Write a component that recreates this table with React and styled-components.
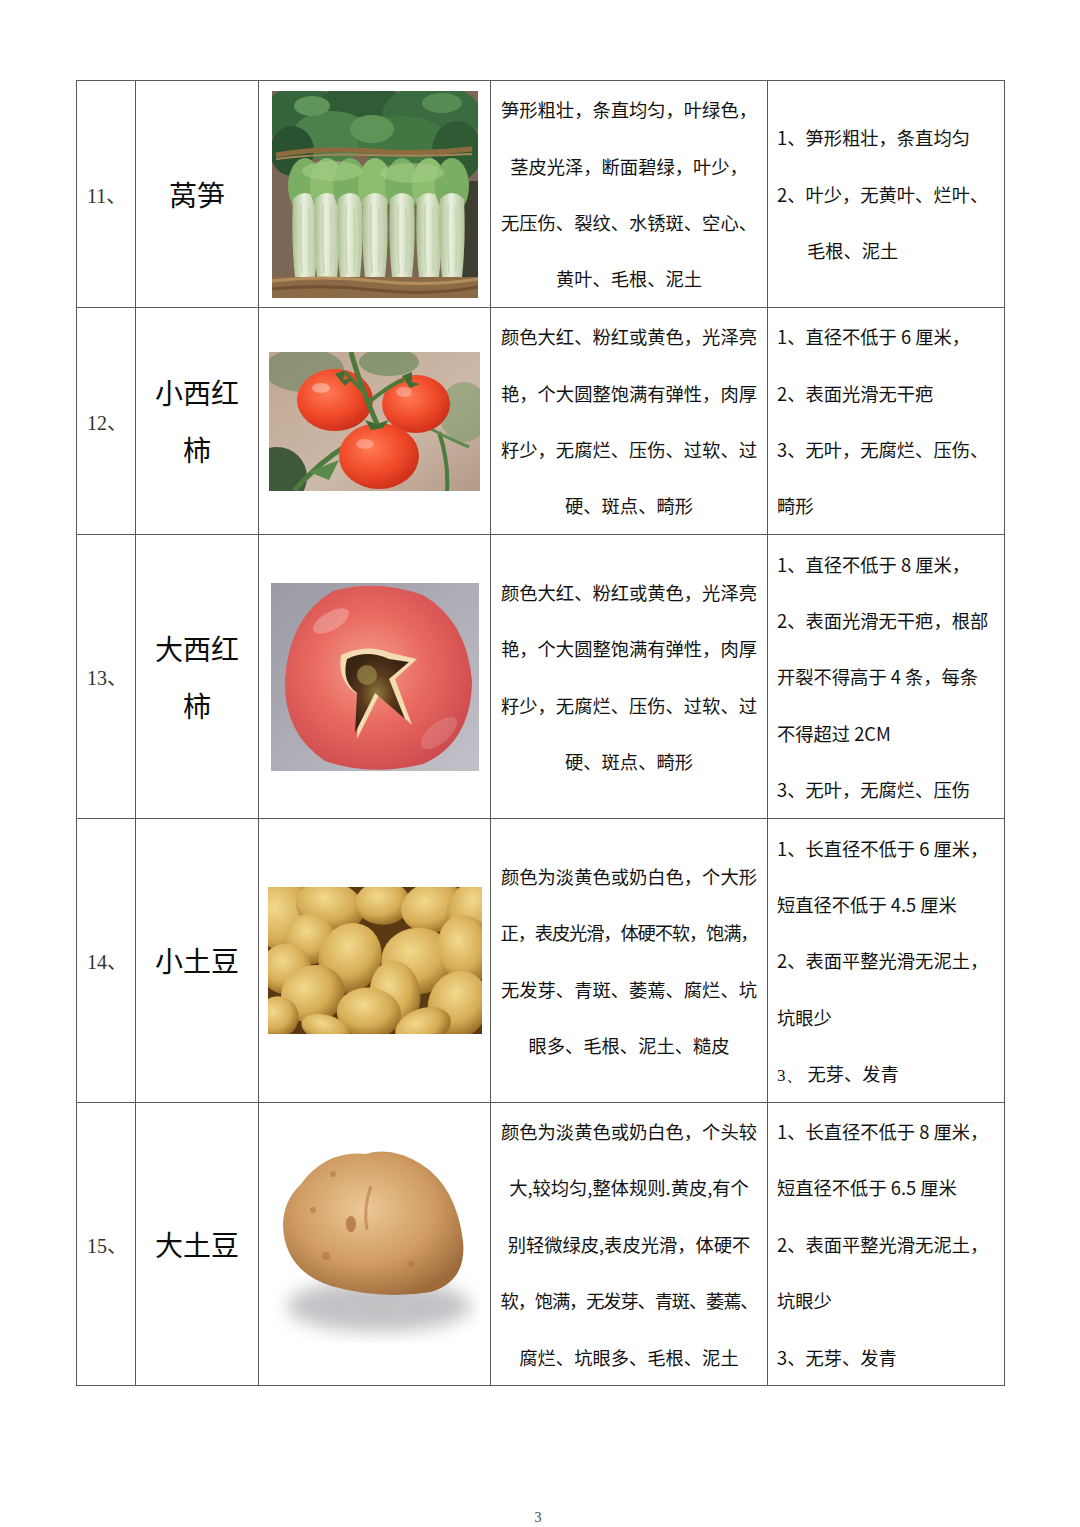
import React from "react";
import styled, { createGlobalStyle } from "styled-components";

const GlobalStyle = createGlobalStyle`
  html, body {
    margin: 0;
    padding: 0;
    background: #ffffff;
  }
  body {
    font-family: "Noto Sans CJK SC", "Noto Sans", sans-serif;
    color: #121212;
  }
`;

const Page = styled.div`
  width: 1080px;
  height: 1527px;
  box-sizing: border-box;
  padding-top: 80px;
  background: #fff;
  overflow: hidden;
`;

const Table = styled.table`
  margin-left: 76px;
  width: 928px;
  border-collapse: collapse;
  table-layout: fixed;
`;

const Cell = styled.td`
  border: 1.5px solid #5a5a5a;
  height: ${(p) => p.$h}px;
  padding: 0;
  vertical-align: middle;
  box-sizing: border-box;
`;

const NoCell = styled(Cell)`
  padding-left: 10px;
  font-family: "Liberation Serif", "Noto Sans CJK SC", serif;
  font-size: 20px;
  color: #333;
`;

const NameCell = styled(Cell)`
  text-align: center;
  font-size: 28px;
  font-weight: 400;
  line-height: 57px;
  color: #0c0c0c;
`;

const PicCell = styled(Cell)`
  text-align: center;
  svg {
    display: block;
    margin: 0 auto;
  }
`;

const DescCell = styled(Cell)`
  text-align: center;
  padding: 0 4px;
`;

const StdCell = styled(Cell)`
  text-align: left;
  padding-left: 9px;
`;

const Line = styled.div`
  font-size: 18.3px;
  line-height: 56.4px;
  height: 56.4px;
  white-space: nowrap;
  letter-spacing: ${(p) => (p.$tight ? "-1.15px" : "0")};
  padding-left: ${(p) => (p.$indent ? "30px" : "0")};
`;

const SerifNum = styled.span`
  font-family: "Liberation Serif", serif;
  font-size: 17px;
  margin-right: 5px;
`;

const Footer = styled.div`
  margin-top: 124px;
  width: 1076px;
  text-align: center;
  font-family: "Liberation Serif", serif;
  font-size: 14px;
  line-height: 16px;
  color: #444;
`;

const Lettuce = () => (
  <svg width="206" height="207" viewBox="0 0 206 207">
    <defs>
      <linearGradient id="stalk" x1="0" x2="1" y1="0" y2="0">
        <stop offset="0" stopColor="#a9bd90" />
        <stop offset="0.45" stopColor="#e9f0de" />
        <stop offset="1" stopColor="#b3c59b" />
      </linearGradient>
    </defs>
    <rect width="206" height="207" fill="#7c6655" />
    <rect x="180" y="90" width="26" height="110" fill="#3e3d32" />
    <ellipse cx="30" cy="25" rx="40" ry="30" fill="#35653a" />
    <ellipse cx="90" cy="18" rx="45" ry="26" fill="#2f5c34" />
    <ellipse cx="160" cy="25" rx="50" ry="32" fill="#3a6c3f" />
    <ellipse cx="60" cy="45" rx="40" ry="25" fill="#4b824b" />
    <ellipse cx="130" cy="50" rx="45" ry="25" fill="#427744" />
    <ellipse cx="185" cy="60" rx="25" ry="30" fill="#2f5a33" />
    <ellipse cx="20" cy="60" rx="22" ry="25" fill="#2a5230" />
    <ellipse cx="100" cy="38" rx="22" ry="14" fill="#5e9458" />
    <ellipse cx="40" cy="15" rx="18" ry="10" fill="#5f955a" />
    <ellipse cx="170" cy="12" rx="20" ry="10" fill="#588c55" />
    <path d="M4 64 Q 50 56 100 60 T 200 58" stroke="#8c6b3f" strokeWidth="5" fill="none" />
    <path d="M4 68 Q 50 62 100 64 T 200 63" stroke="#a88556" strokeWidth="2" fill="none" />
    {[33, 55, 78, 103, 130, 157, 180].map((x, i) => (
      <g key={i}>
        <ellipse cx={x} cy="95" rx="17" ry="28" fill={i % 2 ? "#8fbd70" : "#7aae62"} />
        <path
          d={`M${x - 12} 108 Q ${x - 14} 150 ${x - 10} 186 L ${x + 10} 186 Q ${x + 14} 150 ${x + 12} 108 Q ${x} 96 ${x - 12} 108 Z`}
          fill="url(#stalk)"
        />
        <path d={`M${x - 4} 114 Q ${x - 5} 150 ${x - 3} 182 M ${x + 4} 116 Q ${x + 5} 150 ${x + 4} 180`} stroke="#c6d4b0" strokeWidth="1.5" fill="none" />
      </g>
    ))}
    <ellipse cx="60" cy="80" rx="30" ry="10" fill="#a3cf84" opacity="0.6" />
    <ellipse cx="140" cy="82" rx="32" ry="10" fill="#a8d289" opacity="0.5" />
    <rect x="0" y="186" width="206" height="21" fill="#8b6a45" />
    <path d="M0 190 Q 50 184 103 190 T 206 188" stroke="#b48d5c" strokeWidth="3" fill="none" />
    <path d="M0 198 Q 50 193 103 199 T 206 196" stroke="#6f5133" strokeWidth="3" fill="none" />
  </svg>
);

const Tomatoes = () => (
  <svg width="211" height="139" viewBox="0 0 211 139">
    <defs>
      <linearGradient id="soil" x1="0" x2="1" y1="0" y2="1">
        <stop offset="0" stopColor="#bea592" />
        <stop offset="0.6" stopColor="#cdb9a8" />
        <stop offset="1" stopColor="#b49a88" />
      </linearGradient>
      <radialGradient id="red" cx="0.4" cy="0.38" r="0.7">
        <stop offset="0" stopColor="#ff7a55" />
        <stop offset="0.55" stopColor="#f04a2a" />
        <stop offset="1" stopColor="#c72a16" />
      </radialGradient>
    </defs>
    <rect width="211" height="139" fill="url(#soil)" />
    <ellipse cx="35" cy="18" rx="40" ry="22" fill="#62805a" opacity="0.55" />
    <ellipse cx="120" cy="10" rx="30" ry="14" fill="#5d8453" opacity="0.6" />
    <ellipse cx="195" cy="60" rx="25" ry="30" fill="#6d9660" opacity="0.5" />
    <ellipse cx="8" cy="125" rx="30" ry="30" fill="#3f5a3a" />
    <path d="M25 139 Q 50 110 80 92" stroke="#4d7a3e" strokeWidth="5" fill="none" />
    <path d="M40 120 L 70 108 L 60 128 Z" fill="#5a8a48" />
    <path d="M170 80 Q 180 110 178 139" stroke="#4d7a3e" strokeWidth="4" fill="none" />
    <path d="M150 70 Q 175 85 200 95" stroke="#5d8a4a" strokeWidth="3" fill="none" />
    <ellipse cx="66" cy="48" rx="38" ry="31" fill="url(#red)" />
    <ellipse cx="147" cy="52" rx="34" ry="29" fill="url(#red)" />
    <ellipse cx="110" cy="104" rx="40" ry="33" fill="url(#red)" />
    <ellipse cx="52" cy="36" rx="9" ry="5" fill="#ffffff" opacity="0.35" />
    <ellipse cx="135" cy="40" rx="8" ry="5" fill="#ffffff" opacity="0.3" />
    <ellipse cx="96" cy="92" rx="9" ry="5" fill="#ffffff" opacity="0.3" />
    <path d="M82 0 Q 90 30 108 72" stroke="#4c7a3c" strokeWidth="5" fill="none" />
    <path d="M95 40 Q 80 25 76 20" stroke="#4c7a3c" strokeWidth="4" fill="none" />
    <path d="M100 50 Q 125 30 135 28" stroke="#4c7a3c" strokeWidth="4" fill="none" />
    <path d="M66 22 l 10 -4 l -2 10 l 10 -2 l -8 8 Z" fill="#3f6d33" />
    <path d="M133 24 l 10 -4 l 0 10 l 8 2 l -10 4 Z" fill="#3f6d33" />
    <path d="M96 68 l 12 4 l 12 -4 l -6 8 l -12 2 Z" fill="#3f6d33" />
  </svg>
);

const BigTomato = () => (
  <svg width="208" height="188" viewBox="0 0 208 188">
    <defs>
      <linearGradient id="gray" x1="0" x2="1" y1="0" y2="1">
        <stop offset="0" stopColor="#9b9aa3" />
        <stop offset="1" stopColor="#c2c1c8" />
      </linearGradient>
      <radialGradient id="pink" cx="0.45" cy="0.45" r="0.65">
        <stop offset="0" stopColor="#f4a08c" />
        <stop offset="0.45" stopColor="#ea6b62" />
        <stop offset="1" stopColor="#c9454a" />
      </radialGradient>
      <radialGradient id="scar" cx="0.5" cy="0.5" r="0.5">
        <stop offset="0" stopColor="#8c7a3a" />
        <stop offset="0.5" stopColor="#5a3a1e" />
        <stop offset="1" stopColor="#3a2412" />
      </radialGradient>
    </defs>
    <rect width="208" height="188" fill="url(#gray)" />
    <path
      d="M62 8 Q 105 -4 152 12 Q 196 38 201 98 Q 200 160 152 181 Q 100 194 54 178 Q 12 150 14 96 Q 18 34 62 8 Z"
      fill="url(#pink)"
    />
    <ellipse cx="60" cy="38" rx="20" ry="9" fill="#ffffff" opacity="0.25" transform="rotate(-30 60 38)" />
    <ellipse cx="168" cy="150" rx="22" ry="10" fill="#ffffff" opacity="0.15" transform="rotate(-40 168 150)" />
    <path d="M70 72 Q 95 60 120 70 L 146 76 L 124 96 L 141 142 L 108 112 L 86 156 L 88 112 Q 66 100 70 72 Z" fill="#f2dcb0" />
    <path d="M76 76 Q 96 66 118 76 L 138 79 L 118 96 L 134 136 L 104 110 L 84 150 L 86 110 Q 70 98 76 76 Z" fill="url(#scar)" />
    <circle cx="96" cy="92" r="10" fill="#9a8a4a" opacity="0.7" />
  </svg>
);

const pile = [
  [18, 28, 30, 34], [62, 20, 30, 22], [115, 16, 24, 19], [165, 20, 28, 22], [205, 24, 22, 28],
  [42, 52, 22, 22], [150, 74, 32, 29], [198, 62, 24, 30], [82, 71, 27, 31], [18, 82, 22, 22],
  [127, 108, 22, 30], [45, 107, 28, 25], [190, 118, 26, 30], [101, 126, 28, 22], [10, 130, 18, 18],
  [155, 140, 25, 16], [58, 142, 22, 12],
];

const Potatoes = () => (
  <svg width="214" height="147" viewBox="0 0 214 147">
    <defs>
      <radialGradient id="spud" cx="0.4" cy="0.35" r="0.7">
        <stop offset="0" stopColor="#f2d98e" />
        <stop offset="0.6" stopColor="#d6ad55" />
        <stop offset="1" stopColor="#8f6420" />
      </radialGradient>
    </defs>
    <rect width="214" height="147" fill="#5a3a12" />
    {pile.map(([cx, cy, rx, ry], i) => (
      <ellipse
        key={i}
        cx={cx}
        cy={cy}
        rx={rx * 1.15}
        ry={ry * 1.15}
        fill="url(#spud)"
        transform={`rotate(${((i * 37) % 50) - 25} ${cx} ${cy})`}
      />
    ))}
  </svg>
);

const Potato = () => (
  <svg width="208" height="197" viewBox="0 0 208 197">
    <defs>
      <radialGradient id="skin" cx="0.45" cy="0.4" r="0.65">
        <stop offset="0" stopColor="#ecc996" />
        <stop offset="0.6" stopColor="#cf9b62" />
        <stop offset="1" stopColor="#9e6c3c" />
      </radialGradient>
      <filter id="blur" x="-30%" y="-60%" width="160%" height="220%">
        <feGaussianBlur stdDeviation="9" />
      </filter>
    </defs>
    <ellipse cx="108" cy="160" rx="92" ry="26" fill="#9a9aa0" opacity="0.6" filter="url(#blur)" />
    <path
      d="M30 38 Q 55 4 95 8 Q 120 0 150 18 Q 185 40 192 95 Q 196 135 160 146 Q 110 154 60 140 Q 14 125 12 80 Q 12 55 30 38 Z"
      fill="url(#skin)"
    />
    <path d="M100 40 Q 92 62 96 84" stroke="#b07a48" strokeWidth="3" fill="none" opacity="0.6" />
    <ellipse cx="80" cy="78" rx="5" ry="8" fill="#a86a36" opacity="0.7" />
    <circle cx="42" cy="64" r="3" fill="#a86a36" opacity="0.5" />
    <circle cx="55" cy="110" r="4" fill="#a86a36" opacity="0.5" />
    <circle cx="140" cy="118" r="3" fill="#a86a36" opacity="0.5" />
    <circle cx="62" cy="28" r="3" fill="#a86a36" opacity="0.5" />
  </svg>
);

const rows = [
  {
    no: "11",
    h: 227,
    name: ["莴笋"],
    Pic: Lettuce,
    desc: [
      { t: "笋形粗壮，条直均匀，叶绿色，" },
      { t: "茎皮光泽，断面碧绿，叶少，" },
      { t: "无压伤、裂纹、水锈斑、空心、" },
      { t: "黄叶、毛根、泥土" },
    ],
    std: [
      { t: "1、笋形粗壮，条直均匀" },
      { t: "2、叶少，无黄叶、烂叶、" },
      { t: "毛根、泥土", indent: true },
    ],
  },
  {
    no: "12",
    h: 227,
    name: ["小西红", "柿"],
    Pic: Tomatoes,
    desc: [
      { t: "颜色大红、粉红或黄色，光泽亮" },
      { t: "艳，个大圆整饱满有弹性，肉厚" },
      { t: "籽少，无腐烂、压伤、过软、过" },
      { t: "硬、斑点、畸形" },
    ],
    std: [
      { t: "1、直径不低于 6 厘米，" },
      { t: "2、表面光滑无干疤" },
      { t: "3、无叶，无腐烂、压伤、" },
      { t: "畸形" },
    ],
  },
  {
    no: "13",
    h: 284,
    name: ["大西红", "柿"],
    Pic: BigTomato,
    desc: [
      { t: "颜色大红、粉红或黄色，光泽亮" },
      { t: "艳，个大圆整饱满有弹性，肉厚" },
      { t: "籽少，无腐烂、压伤、过软、过" },
      { t: "硬、斑点、畸形" },
    ],
    std: [
      { t: "1、直径不低于 8 厘米，" },
      { t: "2、表面光滑无干疤，根部" },
      { t: "开裂不得高于 4 条，每条" },
      { t: "不得超过 2CM" },
      { t: "3、无叶，无腐烂、压伤" },
    ],
  },
  {
    no: "14",
    h: 284,
    name: ["小土豆"],
    Pic: Potatoes,
    desc: [
      { t: "颜色为淡黄色或奶白色，个大形" },
      { t: "正，表皮光滑，体硬不软，饱满，", tight: true },
      { t: "无发芽、青斑、萎蔫、腐烂、坑" },
      { t: "眼多、毛根、泥土、糙皮" },
    ],
    std: [
      { t: "1、长直径不低于 6 厘米，" },
      { t: "短直径不低于 4.5 厘米" },
      { t: "2、表面平整光滑无泥土，" },
      { t: "坑眼少" },
      { t: "无芽、发青", num: "3、" },
    ],
  },
  {
    no: "15",
    h: 283,
    name: ["大土豆"],
    Pic: Potato,
    desc: [
      { t: "颜色为淡黄色或奶白色，个头较" },
      { t: "大,较均匀,整体规则.黄皮,有个" },
      { t: "别轻微绿皮,表皮光滑，体硬不" },
      { t: "软，饱满，无发芽、青斑、萎蔫、", tight: true },
      { t: "腐烂、坑眼多、毛根、泥土" },
    ],
    std: [
      { t: "1、长直径不低于 8 厘米，" },
      { t: "短直径不低于 6.5 厘米" },
      { t: "2、表面平整光滑无泥土，" },
      { t: "坑眼少" },
      { t: "3、无芽、发青" },
    ],
  },
];

export default function App() {
  return (
    <Page>
      <GlobalStyle />
      <Table>
        <colgroup>
          <col style={{ width: 59 }} />
          <col style={{ width: 123 }} />
          <col style={{ width: 232 }} />
          <col style={{ width: 277 }} />
          <col style={{ width: 237 }} />
        </colgroup>
        <tbody>
          {rows.map(({ no, h, name, Pic, desc, std }) => (
            <tr key={no}>
              <NoCell $h={h}>{no}、</NoCell>
              <NameCell $h={h}>
                {name.map((n) => (
                  <div key={n}>{n}</div>
                ))}
              </NameCell>
              <PicCell $h={h}>
                <Pic />
              </PicCell>
              <DescCell $h={h}>
                {desc.map((d, i) => (
                  <Line key={i} $tight={d.tight}>
                    {d.t}
                  </Line>
                ))}
              </DescCell>
              <StdCell $h={h}>
                {std.map((s, i) => (
                  <Line key={i} $indent={s.indent}>
                    {s.num && <SerifNum>{s.num}</SerifNum>}
                    {s.t}
                  </Line>
                ))}
              </StdCell>
            </tr>
          ))}
        </tbody>
      </Table>
      <Footer>3</Footer>
    </Page>
  );
}
